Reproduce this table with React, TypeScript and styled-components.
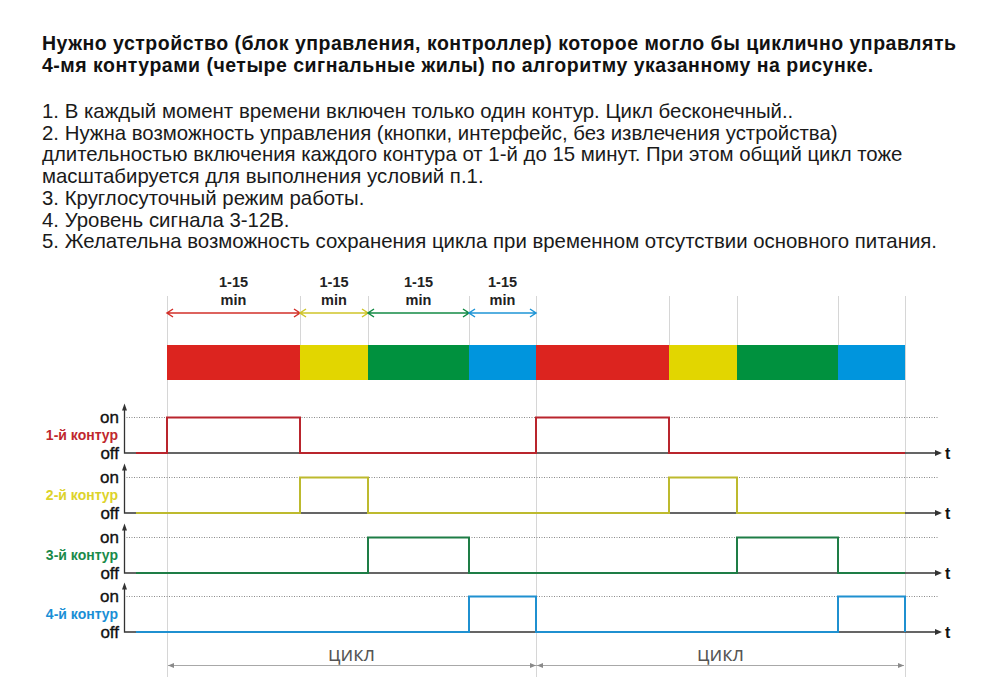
import React from "react";
import styled, { createGlobalStyle } from "styled-components";

const GlobalStyle = createGlobalStyle`
  html, body {
    margin: 0;
    padding: 0;
    background: #ffffff;
    overflow: hidden;
  }
  body {
    font-family: "Liberation Sans", Arial, sans-serif;
    color: #111111;
  }
`;

const Page = styled.main`
  width: 1000px;
  height: 695px;
  padding: 32px 0 0 42px;
  box-sizing: border-box;
`;

const Heading = styled.h1`
  margin: 0 0 25px;
  font-size: 19.5px;
  line-height: 22px;
  letter-spacing: 0.5px;
  font-weight: bold;
  color: #111111;
  white-space: nowrap;
`;

const Requirements = styled.div`
  font-size: 20.4px;
  line-height: 21.7px;
  color: #1a1a1a;
  white-space: nowrap;
`;

const Line = styled.div``;

const Diagram = styled.svg`
  display: block;
  margin: 7px 0 0 -42px;
  font-family: "Liberation Sans", Arial, sans-serif;
`;

const GridLine = styled.line`
  stroke: #d6d6d6;
  stroke-width: 1;
`;

const SpanArrow = styled.path<{ $color: string }>`
  fill: none;
  stroke: ${(p) => p.$color};
  stroke-width: 1.5;
`;

const SpanLabel = styled.text`
  font-size: 14.5px;
  font-weight: bold;
  fill: #222222;
  text-anchor: middle;
`;

const Segment = styled.rect<{ $color: string }>`
  fill: ${(p) => p.$color};
`;

const OnLevel = styled.line`
  stroke: #8a8a8a;
  stroke-width: 1;
  stroke-dasharray: 1 1.5;
`;

const Axis = styled.path`
  fill: none;
  stroke: #333333;
  stroke-width: 1.3;
`;

const ArrowHead = styled.path`
  fill: #333333;
`;

const Wave = styled.path<{ $color: string }>`
  fill: none;
  stroke: ${(p) => p.$color};
  stroke-width: 2;
  stroke-linejoin: miter;
`;

const LevelText = styled.text`
  font-size: 17px;
  fill: #111111;
  stroke: #111111;
  stroke-width: 0.35;
  text-anchor: end;
`;

const ChannelName = styled.text<{ $color: string }>`
  font-size: 14px;
  font-weight: bold;
  fill: ${(p) => p.$color};
  text-anchor: end;
`;

const TimeMark = styled.text`
  font-size: 16px;
  font-weight: bold;
  fill: #111111;
`;

const CycleLine = styled.line`
  stroke: #a8a8a8;
  stroke-width: 1;
`;

const CycleHead = styled.path`
  fill: #8a8a8a;
`;

const CycleText = styled.text`
  font-family: "Open Sans", "Liberation Sans", sans-serif;
  font-size: 20px;
  fill: #555555;
  text-anchor: middle;
`;

const segments = [
  { from: 167, to: 300, bar: "#dc241f", arrow: "#d2302a" },
  { from: 300, to: 368, bar: "#e2d600", arrow: "#cfc52a" },
  { from: 368, to: 469, bar: "#00913e", arrow: "#138a45" },
  { from: 469, to: 536, bar: "#0095dd", arrow: "#1f95d6" },
];

const secondCycle = [
  { from: 536, to: 669, bar: "#dc241f" },
  { from: 669, to: 737, bar: "#e2d600" },
  { from: 737, to: 838, bar: "#00913e" },
  { from: 838, to: 905, bar: "#0095dd" },
];

const channels = [
  { name: "1-й контур", label: "#c0272d", wave: "#b9252d", off: 453, on: [[167, 300], [536, 669]] },
  { name: "2-й контур", label: "#ddd32a", wave: "#bdba2e", off: 513, on: [[300, 368], [669, 737]] },
  { name: "3-й контур", label: "#1a8a4a", wave: "#1e7d46", off: 573, on: [[368, 469], [737, 838]] },
  { name: "4-й контур", label: "#1a8fd6", wave: "#1f90d0", off: 632, on: [[469, 536], [838, 905]] },
];

const HIGH = 35.5;
const AXIS_X = 124.5;

const wavePath = (off: number, on: number[][]) => {
  const hi = off - HIGH;
  let d = `M 136 ${off}`;
  on.forEach(([a, b]) => {
    d += ` L ${a} ${off} L ${a} ${hi} L ${b} ${hi} L ${b} ${off}`;
  });
  return d + " L 905 " + off;
};

const spanArrow = (a: number, b: number, y: number) =>
  `M ${a} ${y} L ${b} ${y} M ${a + 6} ${y - 4} L ${a} ${y} L ${a + 6} ${y + 4} M ${b - 6} ${y - 4} L ${b} ${y} L ${b - 6} ${y + 4}`;

const cycleHeads = (a: number, b: number, y: number) =>
  `M ${a} ${y} L ${a + 6} ${y - 2.5} L ${a + 6} ${y + 2.5} Z M ${b} ${y} L ${b - 6} ${y - 2.5} L ${b - 6} ${y + 2.5} Z`;

export default function App() {
  return (
    <>
      <GlobalStyle />
      <Page>
        <Heading>
          Нужно устройство (блок управления, контроллер) которое могло бы циклично управлять
          <br />
          4-мя контурами (четыре сигнальные жилы) по алгоритму указанному на рисунке.
        </Heading>
        <Requirements>
          <Line>1. В каждый момент времени включен только один контур. Цикл бесконечный..</Line>
          <Line>2. Нужна возможность управления (кнопки, интерфейс, без извлечения устройства)</Line>
          <Line>длительностью включения каждого контура от 1-й до 15 минут. При этом общий цикл тоже</Line>
          <Line>масштабируется для выполнения условий п.1.</Line>
          <Line>3. Круглосуточный режим работы.</Line>
          <Line>4. Уровень сигнала 3-12В.</Line>
          <Line>5. Желательна возможность сохранения цикла при временном отсутствии основного питания.</Line>
        </Requirements>

        <Diagram width={1000} height={435} viewBox="0 260 1000 435">
          {[300, 368, 469, 669, 737, 838].map((x) => (
            <GridLine key={x} x1={x + 0.5} y1={296} x2={x + 0.5} y2={345} />
          ))}
          {[167, 536, 905].map((x) => (
            <GridLine key={x} x1={x + 0.5} y1={296} x2={x + 0.5} y2={677} />
          ))}

          {segments.map((s) => (
            <g key={s.from}>
              <SpanLabel x={(s.from + s.to) / 2} y={287}>1-15</SpanLabel>
              <SpanLabel x={(s.from + s.to) / 2} y={305}>min</SpanLabel>
              <SpanArrow $color={s.arrow} d={spanArrow(s.from, s.to, 313)} />
            </g>
          ))}

          {[...segments, ...secondCycle].map((s) => (
            <Segment key={"bar" + s.from} $color={s.bar} x={s.from} y={345} width={s.to - s.from} height={35} />
          ))}

          {channels.map((c) => {
            const hi = c.off - HIGH;
            return (
              <g key={c.name}>
                <OnLevel x1={AXIS_X + 2} y1={hi} x2={939} y2={hi} />
                <Axis d={`M ${AXIS_X} ${hi - 10} L ${AXIS_X} ${c.off} L 936 ${c.off}`} />
                <ArrowHead d={`M ${AXIS_X} ${hi - 14} L ${AXIS_X - 2.5} ${hi - 7} L ${AXIS_X + 2.5} ${hi - 7} Z`} />
                <ArrowHead d={`M 942 ${c.off} L 935 ${c.off - 3} L 935 ${c.off + 3} Z`} />
                <Wave $color={c.wave} d={wavePath(c.off, c.on)} />
                <LevelText x={119} y={hi + 5}>on</LevelText>
                <LevelText x={119} y={c.off + 6}>off</LevelText>
                <ChannelName $color={c.label} x={118} y={(hi + c.off) / 2 + 5}>
                  {c.name}
                </ChannelName>
                <TimeMark x={945} y={c.off + 6}>t</TimeMark>
              </g>
            );
          })}

          <CycleLine x1={168} y1={665.5} x2={904} y2={665.5} />
          <CycleHead d={cycleHeads(168, 536, 665.5)} />
          <CycleHead d={cycleHeads(537, 904, 665.5)} />
          <CycleText x={351.5} y={661}>цикл</CycleText>
          <CycleText x={720.5} y={661}>цикл</CycleText>
        </Diagram>
      </Page>
    </>
  );
}
